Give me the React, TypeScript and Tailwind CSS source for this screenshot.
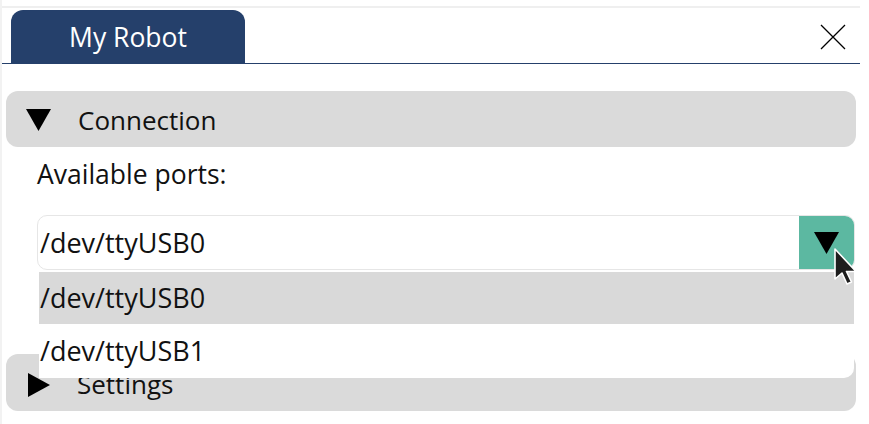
export default function App() {
  return (
    <main
      className="w-[869px] h-[424px] bg-white overflow-hidden relative"
      style={{ fontFamily: '"Open Sans", "Noto Sans", sans-serif' }}
    >
      <div className="w-[860px] h-full border-l-2 border-[#f2f2f2] flex flex-col">
        <div className="mt-[6px] h-[2px] bg-[#efefef]" />

        <div className="mt-[2px] flex items-end border-b border-[#25406b] relative">
          <div className="ml-[9px] w-[234px] h-[53px] rounded-t-[12px] bg-[#25406b] text-white text-[26.5px] flex items-center justify-center pt-[2px]">
            My Robot
          </div>
          <button
            type="button"
            aria-label="Close"
            className="absolute right-[14px] top-[14px] text-black"
          >
            <CloseIcon />
          </button>
        </div>

        <div className="px-[4px]">
          <section className="mt-[27px] h-[56px] rounded-[12px] bg-[#dadada] flex items-center pl-[20px] pt-[2px]">
            <TriangleDown />
            <span className="ml-[27px] text-[26px] text-[#111]">Connection</span>
          </section>

          <p className="mt-[10px] ml-[31px] text-[26.5px] leading-[34px] text-[#111]">
            Available ports:
          </p>

          <div className="relative mt-[24px] ml-[31px] w-[818px] z-20">
            <div className="h-[55px] rounded-[10px] border border-[#e6e6e6] overflow-hidden flex items-stretch">
              <div className="flex-1 flex items-center pl-[2px] pt-[1px] text-[27px] text-[#111]">
                /dev/ttyUSB0
              </div>
              <div className="w-[55px] bg-[#5cb8a1] flex items-center justify-center">
                <TriangleDown />
              </div>
            </div>

            <ul className="absolute left-[2px] top-[57px] w-[815px] bg-white rounded-br-[10px] text-[27px] text-[#111]">
              <li className="h-[52px] bg-[#d9d9d9] flex items-center pl-[1px] pt-[1px]">
                /dev/ttyUSB0
              </li>
              <li className="h-[54px] flex items-center pl-[1px] pt-[1px] rounded-br-[10px]">
                /dev/ttyUSB1
              </li>
            </ul>

            <Cursor />
          </div>

          <section className="mt-[84px] h-[57px] rounded-[12px] bg-[#dadada] flex items-center pl-[22px] pt-[4px]">
            <TriangleRight />
            <span className="ml-[27px] text-[26px] text-[#111]">Settings</span>
          </section>
        </div>
      </div>
    </main>
  );
}

function TriangleDown() {
  return (
    <svg width="25" height="22" viewBox="0 0 25 22">
      <path d="M0 0H25L12.5 22Z" fill="#000" />
    </svg>
  );
}

function TriangleRight() {
  return (
    <svg width="22" height="24" viewBox="0 0 22 24">
      <path d="M0 0L22 12L0 24Z" fill="#000" />
    </svg>
  );
}

function CloseIcon() {
  return (
    <svg width="26" height="26" viewBox="0 0 26 26" fill="none" stroke="#000" strokeWidth="1.3">
      <path d="M1 1L25 25M25 1L1 25" />
    </svg>
  );
}

function Cursor() {
  return (
    <svg
      className="absolute left-[796px] top-[32px]"
      width="26"
      height="40"
      viewBox="0 0 26 40"
    >
      <path
        d="M2 2V32L9 26L14 37L18.5 35L13.5 24.5H23Z"
        fill="#1e1e1e"
        stroke="#fff"
        strokeWidth="1.6"
        strokeLinejoin="round"
      />
    </svg>
  );
}
